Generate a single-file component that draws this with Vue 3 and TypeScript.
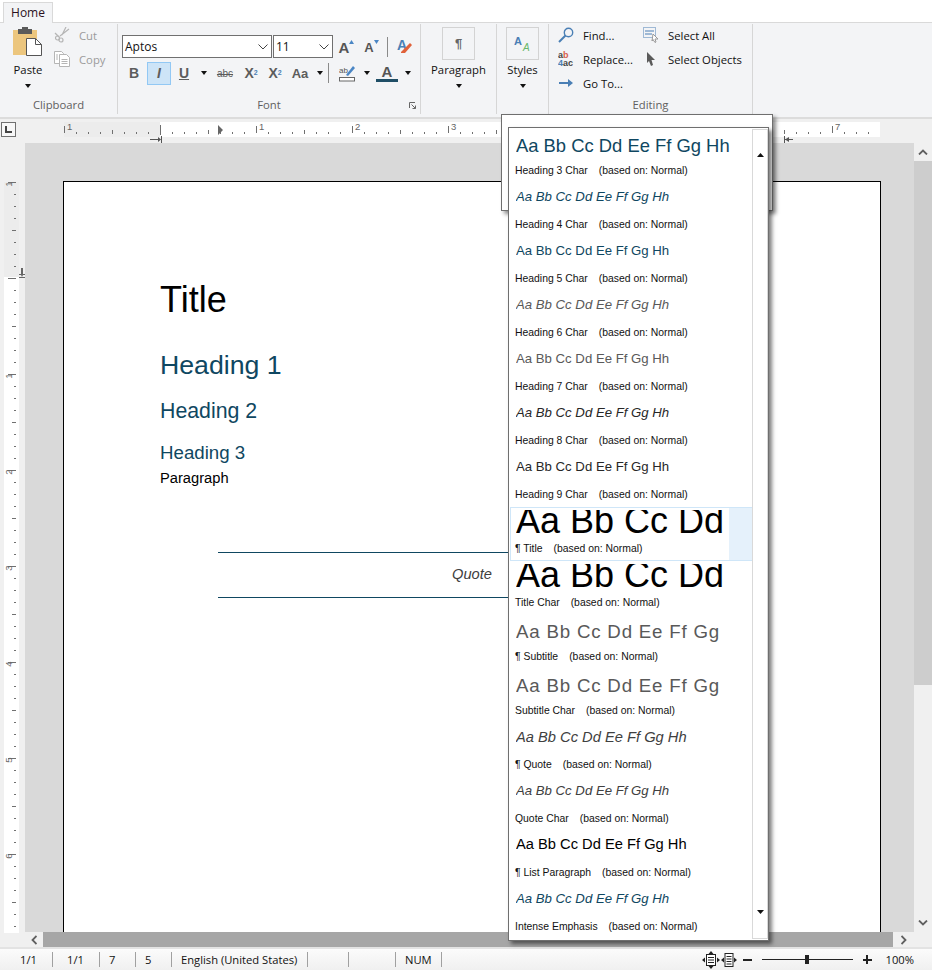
<script setup lang="ts">
import { computed } from "vue";

type StyleRow = {
  preview: string;
  label: string;
  kind: string;
  para?: boolean;
  selected?: boolean;
};

const ALPHA = "Aa Bb Cc Dd Ee Ff Gg Hh";

const styleRows: StyleRow[] = [
  { preview: ALPHA, label: "Heading 3 Char", kind: "h3" },
  { preview: ALPHA, label: "Heading 4 Char", kind: "h4" },
  { preview: ALPHA, label: "Heading 5 Char", kind: "h5" },
  { preview: ALPHA, label: "Heading 6 Char", kind: "h6" },
  { preview: ALPHA, label: "Heading 7 Char", kind: "h7" },
  { preview: ALPHA, label: "Heading 8 Char", kind: "h8" },
  { preview: ALPHA, label: "Heading 9 Char", kind: "h9" },
  { preview: "Aa Bb Cc Dd", label: "Title", kind: "title", para: true, selected: true },
  { preview: "Aa Bb Cc Dd", label: "Title Char", kind: "title" },
  { preview: "Aa Bb Cc Dd Ee Ff Gg", label: "Subtitle", kind: "subtitle", para: true },
  { preview: "Aa Bb Cc Dd Ee Ff Gg", label: "Subtitle Char", kind: "subtitle" },
  { preview: ALPHA, label: "Quote", kind: "quote", para: true },
  { preview: ALPHA, label: "Quote Char", kind: "quotechar" },
  { preview: ALPHA, label: "List Paragraph", kind: "listp", para: true },
  { preview: ALPHA, label: "Intense Emphasis", kind: "intense" },
];

// ruler marks: one inch is 96px, a tick every 12px
const INCH = 96;
const hOrigin = 96; // inside the 816px strip
const vOrigin = 95;

const hTicks = computed(() => {
  const out: { x: number; h: number; y: number }[] = [];
  for (let i = 0; i <= 68; i++) {
    const x = i * 12;
    if (i === 8) out.push({ x, h: 10, y: 6 });
    else if (i % 8 === 0) out.push({ x, h: 7, y: 7 });
    else if (i % 4 === 0) out.push({ x, h: 4, y: 11 });
    else out.push({ x, h: 2, y: 13 });
  }
  return out;
});

const hNums = computed(() =>
  [-1, 1, 2, 3, 4, 5, 6, 7].map((n) => ({ n: Math.abs(n), x: hOrigin + n * INCH + 3 }))
);

const vTicks = computed(() => {
  const out: { y: number; w: number; x: number }[] = [];
  for (let i = 0; i <= 66; i++) {
    const y = i * 12;
    if (i % 8 === 0) out.push({ y, w: 8, x: 8 });
    else if (i % 4 === 0) out.push({ y, w: 4, x: 12 });
    else out.push({ y, w: 2, x: 14 });
  }
  return out;
});

const vNums = computed(() =>
  [-1, 1, 2, 3, 4, 5, 6, 7].map((n) => ({ n: Math.abs(n), y: vOrigin + n * INCH + 3 }))
);
</script>

<template>
  <div class="app">
    <div class="tabs">
      <div class="tab">Home</div>
    </div>

    <div class="ribbon">
      <section class="group clipboard">
        <div class="group-body clip-body">
          <div class="big-btn paste">
            <svg width="30" height="30" viewBox="0 0 30 30">
              <rect x="0" y="3" width="24" height="25" fill="#ecc67e" />
              <rect x="5" y="2" width="14" height="5" fill="#5a5a5a" />
              <rect x="9" y="0" width="6" height="3" fill="#5a5a5a" />
              <path d="M13.5 11.5h9l6 6v11h-15z" fill="#fff" stroke="#555" />
              <path d="M22.5 11.5v6h6" fill="none" stroke="#555" />
            </svg>
            <span class="btn-label">Paste</span>
            <i class="caret"></i>
          </div>
          <div class="clip-col">
            <div class="small-btn off">
              <svg width="16" height="16" viewBox="0 0 16 16" fill="none" stroke="#b5b5b5" stroke-width="1.2">
                <path d="M15 2L6 9M12 0L8 8" />
                <circle cx="3.5" cy="11" r="2" />
                <circle cx="7" cy="13" r="2" />
                <path d="M5 10L1 6" />
              </svg>
              <span>Cut</span>
            </div>
            <div class="small-btn off">
              <svg width="16" height="16" viewBox="0 0 16 16" fill="#fff" stroke="#b5b5b5">
                <path d="M.5.5h7l2 2v10h-9z" />
                <path d="M5.5 3.5h7l3 3v9h-10z" />
                <path d="M7.5 8.5h6M7.5 10.5h6M7.5 12.5h6M2 4h2M2 6h2M2 8h2" fill="none" />
              </svg>
              <span>Copy</span>
            </div>
          </div>
        </div>
        <div class="group-label">Clipboard</div>
      </section>

      <section class="group font">
        <div class="group-body font-body">
          <div class="font-row top">
            <div class="combo name">
              <span>Aptos</span>
              <svg width="10" height="6" viewBox="0 0 10 6" fill="none" stroke="#444"><path d="M.5.5L5 5 9.5.5" /></svg>
            </div>
            <div class="combo size">
              <span>11</span>
              <svg width="10" height="6" viewBox="0 0 10 6" fill="none" stroke="#444"><path d="M.5.5L5 5 9.5.5" /></svg>
            </div>
            <div class="grow-btn first">
              <span>A</span>
              <svg width="5" height="4" viewBox="0 0 5 4"><path d="M0 4L2.5 0 5 4z" fill="#4a86c5" /></svg>
            </div>
            <div class="grow-btn">
              <span class="smaller">A</span>
              <svg width="5" height="4" viewBox="0 0 5 4"><path d="M0 0L2.5 4 5 0z" fill="#4a86c5" /></svg>
            </div>
            <i class="vsep"></i>
            <svg class="clear-fmt" width="16" height="15" viewBox="0 0 16 15">
              <text x="1" y="11" class="blue-a">A</text>
              <path d="M5 13L14 4l2 2-7 8H5z" fill="#e0613a" />
            </svg>
          </div>
          <div class="font-row bottom">
            <span class="fmt bold">B</span>
            <span class="fmt italic on">I</span>
            <span class="fmt under">U</span>
            <i class="caret tiny u-caret"></i>
            <span class="fmt strike">abc</span>
            <span class="fmt script">X<sub>2</sub></span>
            <span class="fmt script">X<sup>2</sup></span>
            <span class="fmt case">Aa</span>
            <i class="caret tiny case-caret"></i>
            <i class="vsep short"></i>
            <svg class="hl" width="18" height="17" viewBox="0 0 18 17">
              <text x="0" y="8" class="tiny-abc">ab</text>
              <path d="M7 10L14 1l2 2-7 8z" fill="#4a86c5" />
              <rect x=".5" y="12.5" width="15" height="3.5" fill="#fff" stroke="#666" />
            </svg>
            <i class="caret tiny"></i>
            <span class="color-a">A</span>
            <i class="caret tiny"></i>
          </div>
        </div>
        <div class="group-label">Font</div>
        <svg class="launcher" width="7" height="7" viewBox="0 0 7 7" fill="none" stroke="#666">
          <path d="M.5 6V.5H6M2.5 2.5L6.5 6.5M6.5 3.5v3h-3" />
        </svg>
      </section>

      <section class="group para">
        <div class="group-body stack-body">
          <div class="box-btn"><span class="pilcrow">¶</span></div>
          <span class="btn-label">Paragraph</span>
          <i class="caret"></i>
        </div>
      </section>

      <section class="group styles">
        <div class="group-body stack-body">
          <div class="box-btn">
            <svg width="18" height="18" viewBox="0 0 18 18">
              <text x="0" y="10" class="styles-a">A</text>
              <text x="9" y="16" class="styles-b">A</text>
            </svg>
          </div>
          <span class="btn-label">Styles</span>
          <i class="caret"></i>
        </div>
      </section>

      <section class="group editing">
        <div class="group-body edit-body">
          <div class="edit-col first">
            <div class="small-btn">
              <svg width="16" height="16" viewBox="0 0 16 16" fill="none" stroke="#4a7fb5" stroke-width="1.4">
                <circle cx="10.5" cy="5.5" r="4.2" />
                <path d="M7.5 8.5L1 15" stroke-width="2" />
              </svg>
              <span>Find...</span>
            </div>
            <div class="small-btn">
              <svg width="16" height="16" viewBox="0 0 16 16">
                <text x="0" y="7" class="rep"><tspan class="rep-dark">a</tspan><tspan class="rep-red">b</tspan></text>
                <text x="0" y="15" class="rep"><tspan class="rep-blue">4</tspan><tspan class="rep-dark">ac</tspan></text>
              </svg>
              <span>Replace...</span>
            </div>
            <div class="small-btn">
              <svg width="16" height="16" viewBox="0 0 16 16" fill="#4a7fb5">
                <path d="M1 7h9V4l5 4-5 4V9H1z" />
              </svg>
              <span>Go To...</span>
            </div>
          </div>
          <div class="edit-col">
            <div class="small-btn">
              <svg width="16" height="16" viewBox="0 0 16 16" fill="none">
                <rect x=".5" y=".5" width="12" height="10" stroke="#4a7fb5" stroke-dasharray="1 1" />
                <path d="M2 4h9M2 7h7" stroke="#4a7fb5" />
                <path d="M10 7l5 5h-3l1 3-1 .5-2-3-1 1.5z" fill="#fff" stroke="#999" />
              </svg>
              <span>Select All</span>
            </div>
            <div class="small-btn">
              <svg width="16" height="16" viewBox="0 0 16 16">
                <path d="M4 1l8 8H8.5l1.5 5-2 1-2-5-2 2z" fill="#5a5a5a" />
              </svg>
              <span>Select Objects</span>
            </div>
          </div>
        </div>
        <div class="group-label">Editing</div>
      </section>
      <div class="ribbon-rest"></div>
    </div>

    <div class="ruler-row">
      <div class="corner">
        <svg width="9" height="9" viewBox="0 0 9 9"><path d="M1 1h2v5h5v2H1z" fill="#444" /></svg>
      </div>
      <svg class="h-ruler" width="816" height="24" viewBox="0 0 816 24">
        <rect x="0" y="3" width="816" height="15" fill="#fff" />
        <rect x="0" y="3" width="96" height="15" fill="#ececec" />
        <rect v-for="t in hTicks" :key="t.x" :x="t.x" :y="t.y" width="1" :height="t.h" fill="#707070" />
        <text v-for="m in hNums" :key="m.x" :x="m.x" y="11" class="rnum">{{ m.n }}</text>
        <path d="M154 6l5 5-5 0zM154 16l5-5-5 0z" fill="#666" />
        <path d="M86 20h8v-2l3 2.5-3 2.5v-2h-8zM97 17h1v7h-1z" fill="#555" />
        <path d="M721 20h8v1h-8zM721 20.500l4-2.500v5zM720 17h1v7h-1z" fill="#555" />
      </svg>
    </div>

    <div class="work">
      <svg class="v-ruler" width="25" height="790" viewBox="0 0 25 790">
        <rect x="4" y="39" width="15" height="751" fill="#fff" />
        <rect x="4" y="39" width="15" height="95" fill="#ececec" />
        <g transform="translate(0 39)">
          <rect v-for="t in vTicks" :key="t.y" :x="t.x" :y="t.y" :width="t.w" height="1" fill="#707070" />
          <text
            v-for="m in vNums"
            :key="m.y"
            class="rnum"
            text-anchor="middle"
            :transform="`translate(12 ${m.y}) rotate(-90)`"
          >{{ m.n }}</text>
          <path d="M21 86h2v6h-2zM19 92h6v1h-6zM21 93h2l-1 2zM19 95h6v1h-6z" fill="#666" />
        </g>
      </svg>

      <div class="doc-col">
        <div class="doc-row">
          <div class="doc-view">
            <div class="page">
              <h1 class="d-title">Title</h1>
              <h2 class="d-h1">Heading 1</h2>
              <h3 class="d-h2">Heading 2</h3>
              <h4 class="d-h3">Heading 3</h4>
              <p class="d-p">Paragraph</p>
              <blockquote class="d-quote">Quote</blockquote>
            </div>
          </div>
          <div class="vscroll">
            <div class="arrow-btn">
              <svg width="10" height="6" viewBox="0 0 10 6" fill="none" stroke="#606060" stroke-width="1.8"><path d="M1 5.5L5 1.5l4 4" /></svg>
            </div>
            <div class="v-thumb"></div>
            <div class="v-track"></div>
            <div class="arrow-btn">
              <svg width="10" height="6" viewBox="0 0 10 6" fill="none" stroke="#606060" stroke-width="1.8"><path d="M1 .5L5 4.5l4-4" /></svg>
            </div>
          </div>
        </div>
        <div class="hscroll">
          <div class="h-arrow">
            <svg width="6" height="10" viewBox="0 0 6 10" fill="none" stroke="#606060" stroke-width="1.8"><path d="M5.5 1L1.5 5l4 4" /></svg>
          </div>
          <div class="h-thumb"></div>
          <div class="h-arrow right">
            <svg width="6" height="10" viewBox="0 0 6 10" fill="none" stroke="#606060" stroke-width="1.8"><path d="M.5 1L4.5 5l-4 4" /></svg>
          </div>
        </div>
      </div>
    </div>

    <div class="status">
      <span class="cell w52">1/1</span>
      <span class="cell w47">1/1</span>
      <span class="cell w36">7</span>
      <span class="cell w36">5</span>
      <span class="cell w136">English (United States)</span>
      <span class="cell w41"></span>
      <span class="cell w47"></span>
      <span class="cell w46">NUM</span>
      <div class="zoom-tools">
        <svg width="18" height="18" viewBox="0 0 18 18" fill="#222">
          <path d="M9 0l2.500 3h-5zM9 18l2.500-3h-5zM0 9l3-2.500v5zM18 9l-3-2.500v5z" />
          <rect x="4.500" y="3.500" width="9" height="11" fill="#fff" stroke="#222" />
          <path d="M6 6.500h6M6 9h6M6 11.500h6" stroke="#222" />
        </svg>
        <svg class="fit" width="16" height="14" viewBox="0 0 16 14" fill="#222">
          <path d="M0 7l3-2.500v5zM16 7l-3-2.500v5z" />
          <rect x="4" y=".5" width="8" height="13" fill="#fff" stroke="#222" />
          <path d="M5.500 3.500h5M5.500 6h5M5.500 8.500h5M5.500 11h5" stroke="#222" />
        </svg>
        <i class="minus"></i>
        <div class="slider"><i class="thumb"></i></div>
        <i class="plus"></i>
        <span class="pct">100%</span>
      </div>
    </div>

    <!-- styles gallery dropdown -->
    <div class="gallery-back"></div>
    <div class="gallery">
      <div class="gallery-list">
        <div
          v-for="row in styleRows"
          :key="row.label"
          class="style-row"
          :class="{ selected: row.selected }"
        >
          <div class="style-inner">
            <div class="preview" :class="row.kind">{{ row.preview }}</div>
            <div class="style-label">
              <span>{{ row.para ? "¶ " : "" }}{{ row.label }}</span>
              <span class="based">(based on: Normal)</span>
            </div>
          </div>
        </div>
      </div>
      <div class="gallery-scroll">
        <svg width="7" height="4" viewBox="0 0 7 4"><path d="M0 4L3.500 0 7 4z" fill="#111" /></svg>
        <svg width="7" height="4" viewBox="0 0 7 4"><path d="M0 0L3.500 4 7 0z" fill="#111" /></svg>
      </div>
    </div>
  </div>
</template>

<style>
html,
body {
  margin: 0;
  background: #fff;
}
</style>

<style scoped>
.app {
  position: relative;
  width: 932px;
  height: 970px;
  overflow: hidden;
  display: flex;
  flex-direction: column;
  font-family: "Open Sans", "Liberation Sans", sans-serif;
  font-size: 11.3px;
  color: #111;
  background: #f0f0f0;
}

.tabs {
  height: 22px;
  background: #fff;
  border-bottom: 1px solid #d9d9d9;
  display: flex;
  padding-left: 3px;
  flex: none;
}

.tab {
  width: 50px;
  height: 21px;
  margin-top: 2px;
  box-sizing: border-box;
  border: 1px solid #d9d9d9;
  border-bottom: none;
  background: #f3f4f6;
  text-align: center;
  line-height: 19px;
  font-size: 12px;
  color: #2a1020;
}

.ribbon {
  height: 94px;
  display: flex;
  flex: none;
  background: #f3f4f6;
  border-bottom: 2px solid #dcdcdc;
  box-sizing: content-box;
}

.group {
  position: relative;
  box-sizing: border-box;
  height: 90px;
  margin-top: 1px;
  border-right: 1px solid #d6d6d6;
  display: flex;
  flex-direction: column;
  flex: none;
}

.clipboard { width: 118px; }
.font { width: 303px; }
.para { width: 76px; }
.styles { width: 52px; }
.editing { width: 204px; }

.ribbon-rest { flex: 1; }

.group-body {
  flex: 1;
  min-height: 0;
}

.group-label {
  height: 17px;
  line-height: 16px;
  text-align: center;
  color: #5f5f5f;
}

.btn-label {
  line-height: 16px;
  white-space: nowrap;
}

.caret {
  display: block;
  width: 0;
  height: 0;
  border-left: 3.5px solid transparent;
  border-right: 3.5px solid transparent;
  border-top: 4px solid #111;
}

.caret.tiny {
  flex: none;
}

.clip-body {
  display: flex;
  padding-top: 3px;
}

.paste {
  width: 56px;
  display: flex;
  flex-direction: column;
  align-items: center;
}

.paste svg {
  margin-bottom: 5px;
}

.paste .caret {
  margin-top: 6px;
}

.clip-col {
  display: flex;
  flex-direction: column;
  margin-top: -4px;
}

.small-btn {
  height: 24px;
  display: flex;
  align-items: center;
  white-space: nowrap;
}

.small-btn svg {
  flex: none;
}

.clip-col .small-btn {
  margin-left: -2px;
  gap: 9px;
}

.small-btn.off {
  color: #9b9b9b;
}

.font-body {
  padding-left: 4px;
}

.font-row {
  display: flex;
  align-items: center;
}

.font-row.top {
  height: 23px;
  margin-top: 11px;
}

.font-row.bottom {
  height: 24px;
  margin-top: 3px;
}

.combo {
  box-sizing: border-box;
  height: 23px;
  background: #fff;
  border: 1px solid #707070;
  display: flex;
  align-items: center;
  justify-content: space-between;
  padding: 0 3px 0 2px;
  font-size: 12px;
}

.combo.name { width: 150px; }
.combo.size { width: 60px; margin-left: 1px; }

.grow-btn {
  width: 25px;
  height: 20px;
  display: flex;
  align-items: flex-start;
  justify-content: center;
  color: #555;
  font-family: "Liberation Sans", sans-serif;
  font-weight: 700;
  font-size: 15px;
  line-height: 21px;
}

.grow-btn.first {
  margin-left: 1px;
}

.grow-btn .smaller {
  font-size: 13px;
}

.grow-btn svg {
  margin-top: 3px;
}

.vsep {
  display: block;
  width: 1px;
  height: 20px;
  background: #8a8a8a;
  margin: 0 8px 0 3px;
  flex: none;
}

.vsep.short {
  margin: 0 10px 0 5px;
}

.blue-a {
  font-family: "Liberation Sans", sans-serif;
  font-weight: 700;
  font-size: 14px;
  fill: #4a7fb5;
}

.fmt {
  box-sizing: border-box;
  width: 24px;
  height: 23px;
  display: flex;
  align-items: center;
  justify-content: center;
  color: #5c5c5c;
  font-family: "Liberation Sans", sans-serif;
  font-weight: 700;
  font-size: 14px;
  flex: none;
}

.fmt.italic {
  font-style: italic;
  margin-left: 1px;
}

.fmt.on {
  background: #cde4f7;
  border: 1px solid #92c8f4;
}

.fmt.under {
  text-decoration: underline;
  margin-left: 1px;
}

.u-caret {
  margin-left: 5px;
}

.fmt.strike {
  width: 28px;
  margin-left: 4px;
  font-size: 10px;
  font-weight: 400;
  text-decoration: line-through;
}

.fmt.script sub,
.fmt.script sup {
  font-size: 7px;
  color: #4a7fb5;
  line-height: 0;
}

.fmt.case {
  width: 26px;
  font-size: 13px;
}

.case-caret {
  margin-left: 4px;
}

.hl {
  margin-right: 7px;
}

.tiny-abc {
  font-family: "Liberation Sans", sans-serif;
  font-size: 8px;
  fill: #555;
}

.color-a {
  width: 22px;
  margin-left: 6px;
  margin-right: 7px;
  box-sizing: border-box;
  text-align: center;
  color: #555;
  font-family: "Liberation Sans", sans-serif;
  font-weight: 700;
  font-size: 15px;
  line-height: 15px;
  border-bottom: 3px solid #1f4e66;
  height: 18px;
}

.launcher {
  position: absolute;
  right: 4px;
  bottom: 5px;
}

.stack-body {
  display: flex;
  flex-direction: column;
  align-items: center;
  padding-top: 3px;
}

.box-btn {
  box-sizing: border-box;
  width: 33px;
  height: 33px;
  border: 1px solid #d3d3d3;
  display: flex;
  align-items: center;
  justify-content: center;
  margin-bottom: 2px;
}

.stack-body .caret {
  margin-top: 6px;
}

.pilcrow {
  color: #666;
  font-size: 13px;
  font-family: "Liberation Sans", sans-serif;
  font-weight: 700;
}

.styles-a {
  font-family: "Liberation Sans", sans-serif;
  font-weight: 700;
  font-size: 11px;
  fill: #4a7fb5;
}

.styles-b {
  font-family: "Liberation Sans", sans-serif;
  font-style: italic;
  font-size: 10px;
  fill: #69b86a;
}

.edit-body {
  display: flex;
  margin-top: -1px;
}

.edit-col {
  display: flex;
  flex-direction: column;
}

.edit-col.first {
  width: 85px;
  padding-left: 9px;
}

.edit-col .small-btn {
  gap: 9px;
}

.rep {
  font-family: "Liberation Sans", sans-serif;
  font-weight: 700;
  font-size: 9px;
}

.rep-dark { fill: #444; }
.rep-red { fill: #d9604c; }
.rep-blue { fill: #4a7fb5; }

.ruler-row {
  height: 24px;
  flex: none;
  display: flex;
  background: #f0f0f0;
}

.corner {
  box-sizing: border-box;
  width: 15px;
  height: 15px;
  margin: 3px 0 0 1px;
  border: 1px solid #707070;
  background: #f7f7f7;
  display: flex;
  align-items: center;
  justify-content: center;
}

.h-ruler {
  margin-left: 48px;
  flex: none;
  display: block;
}

.rnum {
  font-family: "Liberation Sans", sans-serif;
  font-size: 9.5px;
  fill: #666;
}

.work {
  flex: 1;
  min-height: 0;
  display: flex;
}

.v-ruler {
  flex: none;
  display: block;
}

.doc-col {
  flex: 1;
  min-width: 0;
  display: flex;
  flex-direction: column;
}

.doc-row {
  flex: 1;
  min-height: 0;
  display: flex;
}

.doc-view {
  flex: 1;
  min-width: 0;
  background: #d9d9d9;
  overflow: hidden;
  padding: 38px 33px 0 38px;
}

.page {
  box-sizing: border-box;
  height: 900px;
  background: #fff;
  border: 1px solid #000;
  padding: 97px 96px 0;
  font-family: "Liberation Sans", sans-serif;
  color: #000;
}

.d-title,
.d-h1,
.d-h2,
.d-h3,
.d-p {
  margin: 0;
  font-weight: 400;
}

.d-title {
  font-size: 36px;
  line-height: 42px;
}

.d-h1 {
  margin-top: 29px;
  font-size: 26.7px;
  line-height: 30px;
  color: #0f4761;
}

.d-h2 {
  margin-top: 18px;
  font-size: 21.3px;
  line-height: 26px;
  color: #0f4761;
}

.d-h3 {
  margin-top: 16px;
  font-size: 18.7px;
  line-height: 25px;
  color: #0f4761;
}

.d-p {
  margin-top: 3px;
  font-size: 14.7px;
  line-height: 20px;
}

.d-quote {
  margin: 64px 58px 0;
  height: 46px;
  box-sizing: border-box;
  border-top: 1px solid #0f4761;
  border-bottom: 1px solid #0f4761;
  text-align: center;
  font-style: italic;
  font-size: 14.7px;
  line-height: 42px;
  color: #404040;
}

.vscroll {
  width: 18px;
  flex: none;
  display: flex;
  flex-direction: column;
  background: #f0f0f0;
}

.arrow-btn {
  height: 18px;
  flex: none;
  display: flex;
  align-items: center;
  justify-content: center;
}

.v-thumb {
  height: 524px;
  background: #cdcdcd;
  flex: none;
}

.v-track {
  flex: 1;
}

.hscroll {
  height: 15px;
  flex: none;
  display: flex;
  background: #f0f0f0;
}

.h-arrow {
  width: 18px;
  flex: none;
  display: flex;
  align-items: center;
  justify-content: center;
}

.h-arrow.right {
  width: 39px;
  padding-right: 18px;
  box-sizing: border-box;
}

.h-thumb {
  flex: 1;
  background: #a6a6a6;
}

.status {
  height: 23px;
  flex: none;
  box-sizing: border-box;
  border-top: 2px solid #e3e3e3;
  background: linear-gradient(#fbfbfb, #f0f0f0);
  display: flex;
  align-items: center;
  font-size: 11.2px;
}

.cell {
  box-sizing: border-box;
  height: 15px;
  line-height: 15px;
  border-right: 1px solid #a0a0a0;
  padding-left: 9px;
  white-space: nowrap;
  flex: none;
}

.w52 { width: 53px; padding-left: 20px; }
.w47 { width: 47px; padding-left: 14px; }
.w36 { width: 36px; }
.w136 { width: 136px; }
.w41 { width: 41px; }
.w46 { width: 46px; }

.zoom-tools {
  margin-left: auto;
  display: flex;
  align-items: center;
  height: 18px;
}

.fit {
  margin-left: 1px;
}

.minus {
  display: block;
  width: 9px;
  height: 2px;
  background: #222;
  margin-left: 6px;
}

.slider {
  position: relative;
  width: 91px;
  height: 1px;
  background: #222;
  margin-left: 10px;
}

.thumb {
  position: absolute;
  left: 43px;
  top: -4px;
  width: 4px;
  height: 9px;
  background: #222;
}

.plus {
  position: relative;
  display: block;
  width: 9px;
  height: 2px;
  background: #222;
  margin-left: 10px;
}

.plus::after {
  content: "";
  position: absolute;
  left: 3.5px;
  top: -3.5px;
  width: 2px;
  height: 9px;
  background: #222;
}

.pct {
  margin-left: 14px;
  margin-right: 18px;
}

.gallery-back {
  position: absolute;
  left: 501px;
  top: 114px;
  width: 272px;
  height: 97px;
  box-sizing: border-box;
  background: #fff;
  border: 1px solid #6f6f6f;
  box-shadow: 3px 3px 4px rgba(0, 0, 0, 0.45);
}

.gallery {
  position: absolute;
  left: 508px;
  top: 127px;
  width: 261px;
  height: 814px;
  box-sizing: border-box;
  background: #fff;
  border: 1px solid #6f6f6f;
  box-shadow: 3px 3px 4px rgba(0, 0, 0, 0.5);
  display: flex;
  font-family: "Liberation Sans", sans-serif;
}

.gallery-list {
  width: 243px;
  flex: none;
  padding-top: 1px;
}

.style-row {
  box-sizing: border-box;
  height: 54px;
  overflow: hidden;
  border: 1px solid transparent;
  margin-left: 1px;
  width: 243px;
}

.style-row.selected {
  background: #e5f1fb;
  border-color: #cfe6f8;
}

.style-inner {
  height: 52px;
  padding-left: 5px;
  box-sizing: border-box;
  overflow: hidden;
}

.selected .style-inner {
  width: 218px;
  background: #fff;
}

.preview {
  height: 31px;
  line-height: 31px;
  white-space: nowrap;
  overflow: hidden;
  font-size: 13.2px;
}

.style-label {
  font-size: 10.4px;
  line-height: 14px;
  margin-top: 3px;
  margin-left: -1px;
  color: #111;
  white-space: nowrap;
}

.based {
  margin-left: 11px;
}

.preview.h3 { font-size: 18.4px; color: #0f4761; }
.preview.h4 { font-style: italic; color: #0f4761; line-height: 25px; }
.preview.h5 { color: #0f4761; line-height: 25px; }
.preview.h6 { font-style: italic; color: #595959; line-height: 25px; }
.preview.h7 { color: #595959; line-height: 25px; }
.preview.h8 { font-style: italic; color: #272727; line-height: 25px; }
.preview.h9 { color: #272727; line-height: 25px; }
.preview.title {
  font-size: 36px;
  color: #000;
  line-height: 21px;
  height: 29px;
  margin-top: 2px;
}
.preview.subtitle { font-size: 18.7px; color: #595959; letter-spacing: 0.8px; }
.preview.quote { font-size: 14.7px; font-style: italic; color: #404040; line-height: 27px; }
.preview.quotechar { font-style: italic; color: #404040; line-height: 25px; }
.preview.listp { font-size: 14.7px; color: #000; line-height: 25px; }
.preview.intense { font-style: italic; color: #0f4761; line-height: 25px; }

.gallery-scroll {
  flex: none;
  width: 16px;
  margin: 1px 0;
  box-sizing: border-box;
  border: 1px solid #d9d9d9;
  display: flex;
  flex-direction: column;
  align-items: center;
  justify-content: space-between;
  padding: 23px 0 24px;
}
</style>
